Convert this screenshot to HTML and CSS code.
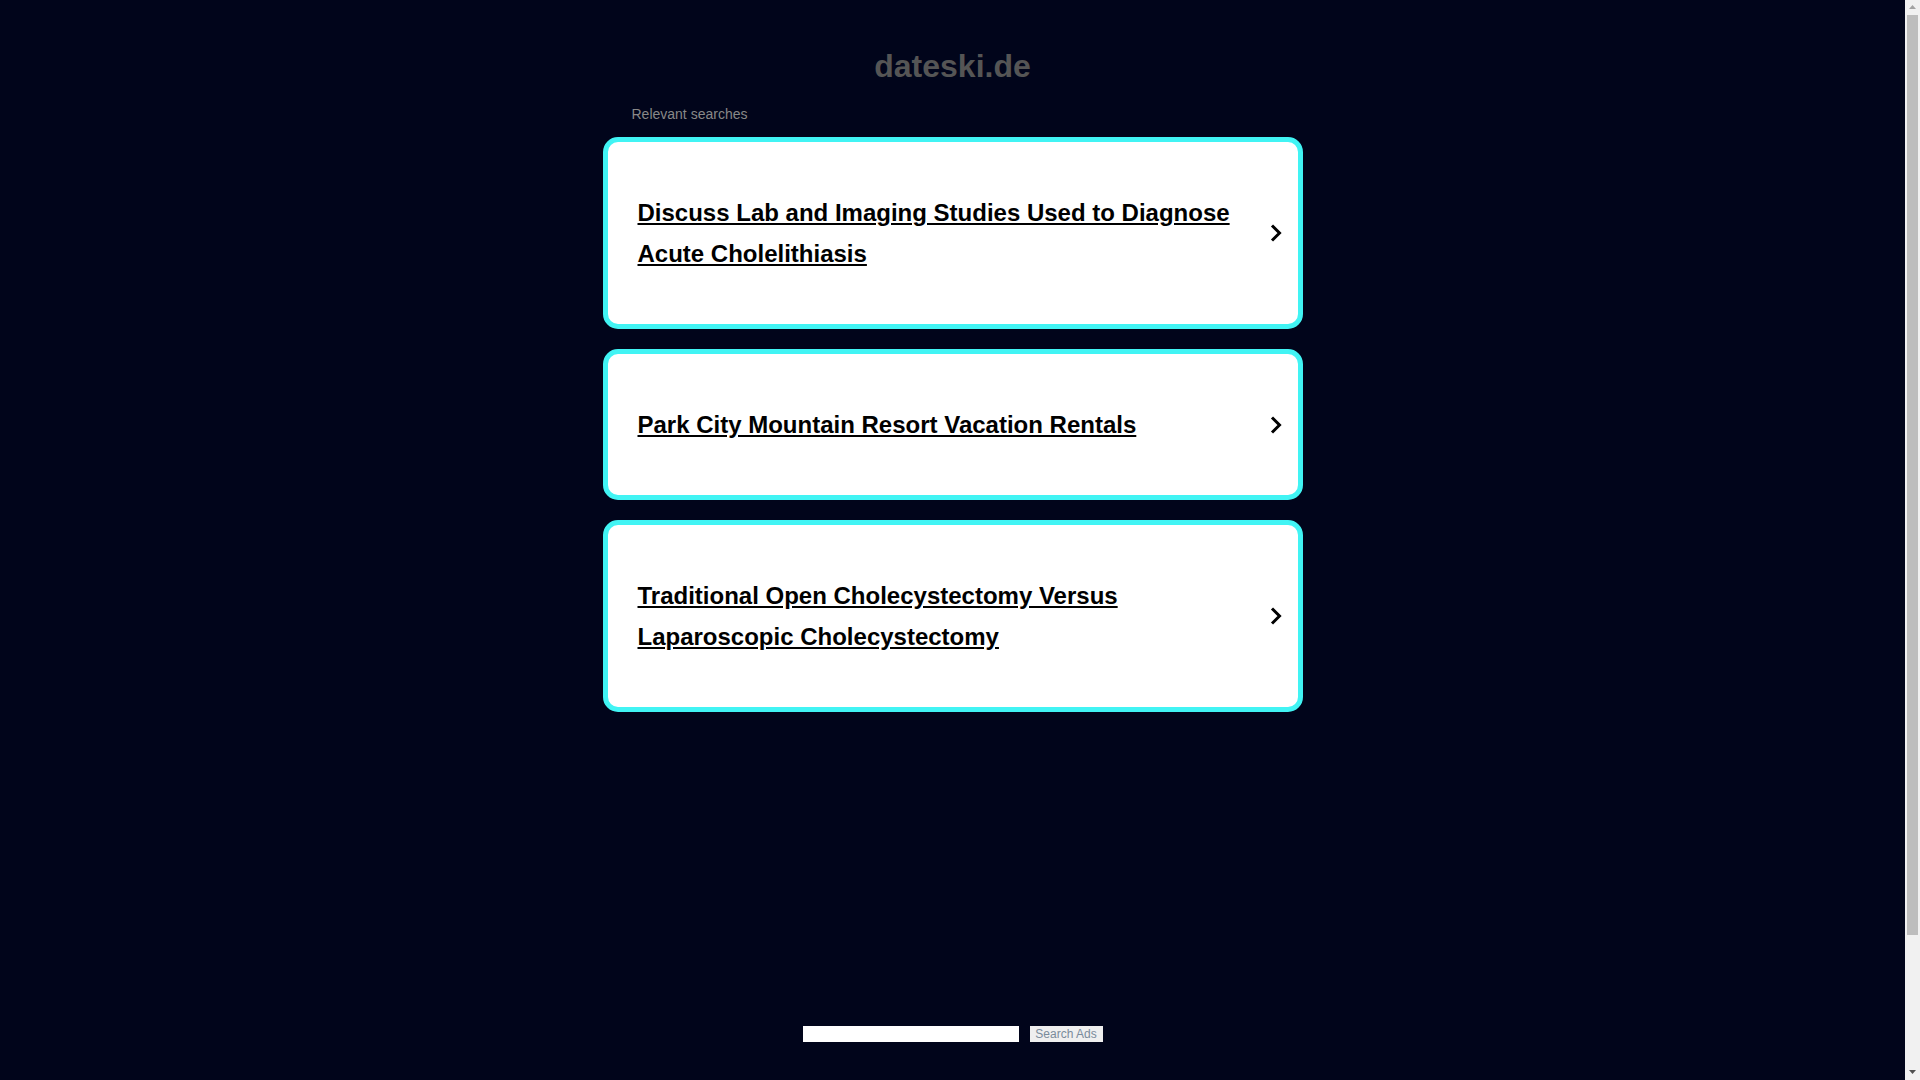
FILE: index.html
```html
<!DOCTYPE html>
<html lang="en">
<head>
<meta charset="utf-8">
<title>dateski.de</title>
<link rel="stylesheet" href="styles.css">
</head>
<body>
<div class="page">
  <div class="container">
    <h1 class="domain">dateski.de</h1>
    <div class="relevant">Relevant searches</div>
    <div class="cards">
      <a class="card" href="#">
        <span class="card-text">Discuss Lab and Imaging Studies Used to Diagnose Acute Cholelithiasis</span>
        <svg class="chevron" viewBox="0 0 12 20" width="12" height="20"><polyline points="2,2.5 9.5,10 2,17.5" fill="none" stroke="#000" stroke-width="3"/></svg>
      </a>
      <a class="card" href="#">
        <span class="card-text">Park City Mountain Resort Vacation Rentals</span>
        <svg class="chevron" viewBox="0 0 12 20" width="12" height="20"><polyline points="2,2.5 9.5,10 2,17.5" fill="none" stroke="#000" stroke-width="3"/></svg>
      </a>
      <a class="card" href="#">
        <span class="card-text">Traditional Open Cholecystectomy Versus Laparoscopic Cholecystectomy</span>
        <svg class="chevron" viewBox="0 0 12 20" width="12" height="20"><polyline points="2,2.5 9.5,10 2,17.5" fill="none" stroke="#000" stroke-width="3"/></svg>
      </a>
    </div>
  </div>
  <form class="search" onsubmit="return false;">
    <input class="search-input" type="text" aria-label="Search">
    <button class="search-btn" type="submit">Search Ads</button>
  </form>
</div>
<div class="scrollbar" aria-hidden="true">
  <svg class="sb-arrow sb-up" viewBox="0 0 7 4" width="7" height="4"><polygon points="0,4 3.5,0 7,4" fill="#a3a3a3"/></svg>
  <div class="sb-thumb"></div>
  <svg class="sb-arrow sb-down" viewBox="0 0 7 4" width="7" height="4"><polygon points="0,0 7,0 3.5,4" fill="#505050"/></svg>
</div>
</body>
</html>
```

FILE: styles.css
```css
html, body {
  margin: 0;
  padding: 0;
  background: #01051b;
}

html {
  scrollbar-width: none;
}

body {
  font-family: "Liberation Sans", Arial, sans-serif;
}

.page {
  width: 1905px;
  min-height: 1233px;
  box-sizing: border-box;
  padding-top: 48px;
}

.container {
  width: 700px;
  margin: 0 auto;
}

.domain {
  margin: 0;
  font-size: 32px;
  line-height: 36px;
  font-weight: bold;
  color: #555555;
  text-align: center;
}

.relevant {
  margin-top: 22px;
  padding-left: 29px;
  font-size: 14px;
  line-height: 16px;
  color: #888888;
}

.cards {
  margin-top: 15px;
  display: flex;
  flex-direction: column;
  gap: 20px;
}

.card {
  display: flex;
  align-items: center;
  box-sizing: border-box;
  width: 700px;
  padding: 50px 16px 50px 30px;
  background: #ffffff;
  border: 5px solid #41f4f4;
  border-radius: 15px;
  color: #000000;
  text-decoration: none;
}

.card-text {
  flex: 1;
  font-size: 24px;
  line-height: 41px;
  font-weight: bold;
  color: #000000;
  text-decoration: underline;
  padding-right: 20px;
}

.chevron {
  flex: none;
  display: block;
}

.search {
  margin-top: 314px;
  display: flex;
  justify-content: center;
  align-items: center;
  gap: 11px;
}

.search-input {
  width: 216px;
  height: 16px;
  box-sizing: border-box;
  border: none;
  padding: 0 2px;
  margin: 0;
  background: #ffffff;
  outline: none;
}

.search-btn {
  width: 73px;
  height: 16px;
  box-sizing: border-box;
  border: none;
  padding: 0;
  margin: 0;
  background: #efefef;
  color: #7a8b9b;
  font-family: "Liberation Sans", Arial, sans-serif;
  font-size: 12px;
  line-height: 16px;
}

/* imitation of the browser's vertical scrollbar */
.scrollbar {
  position: fixed;
  top: 0;
  right: 0;
  width: 15px;
  height: 100vh;
  background: #f1f1f1;
  display: flex;
  flex-direction: column;
  align-items: center;
}

.sb-arrow {
  display: block;
  flex: none;
}

.sb-up {
  margin-top: 5px;
  margin-bottom: 6px;
}

.sb-thumb {
  width: 11px;
  height: 920px;
  margin-left: 2px;
  margin-right: 2px;
  background: #bdbdbd;
}

.sb-down {
  margin-top: auto;
  margin-bottom: 6px;
}
```
